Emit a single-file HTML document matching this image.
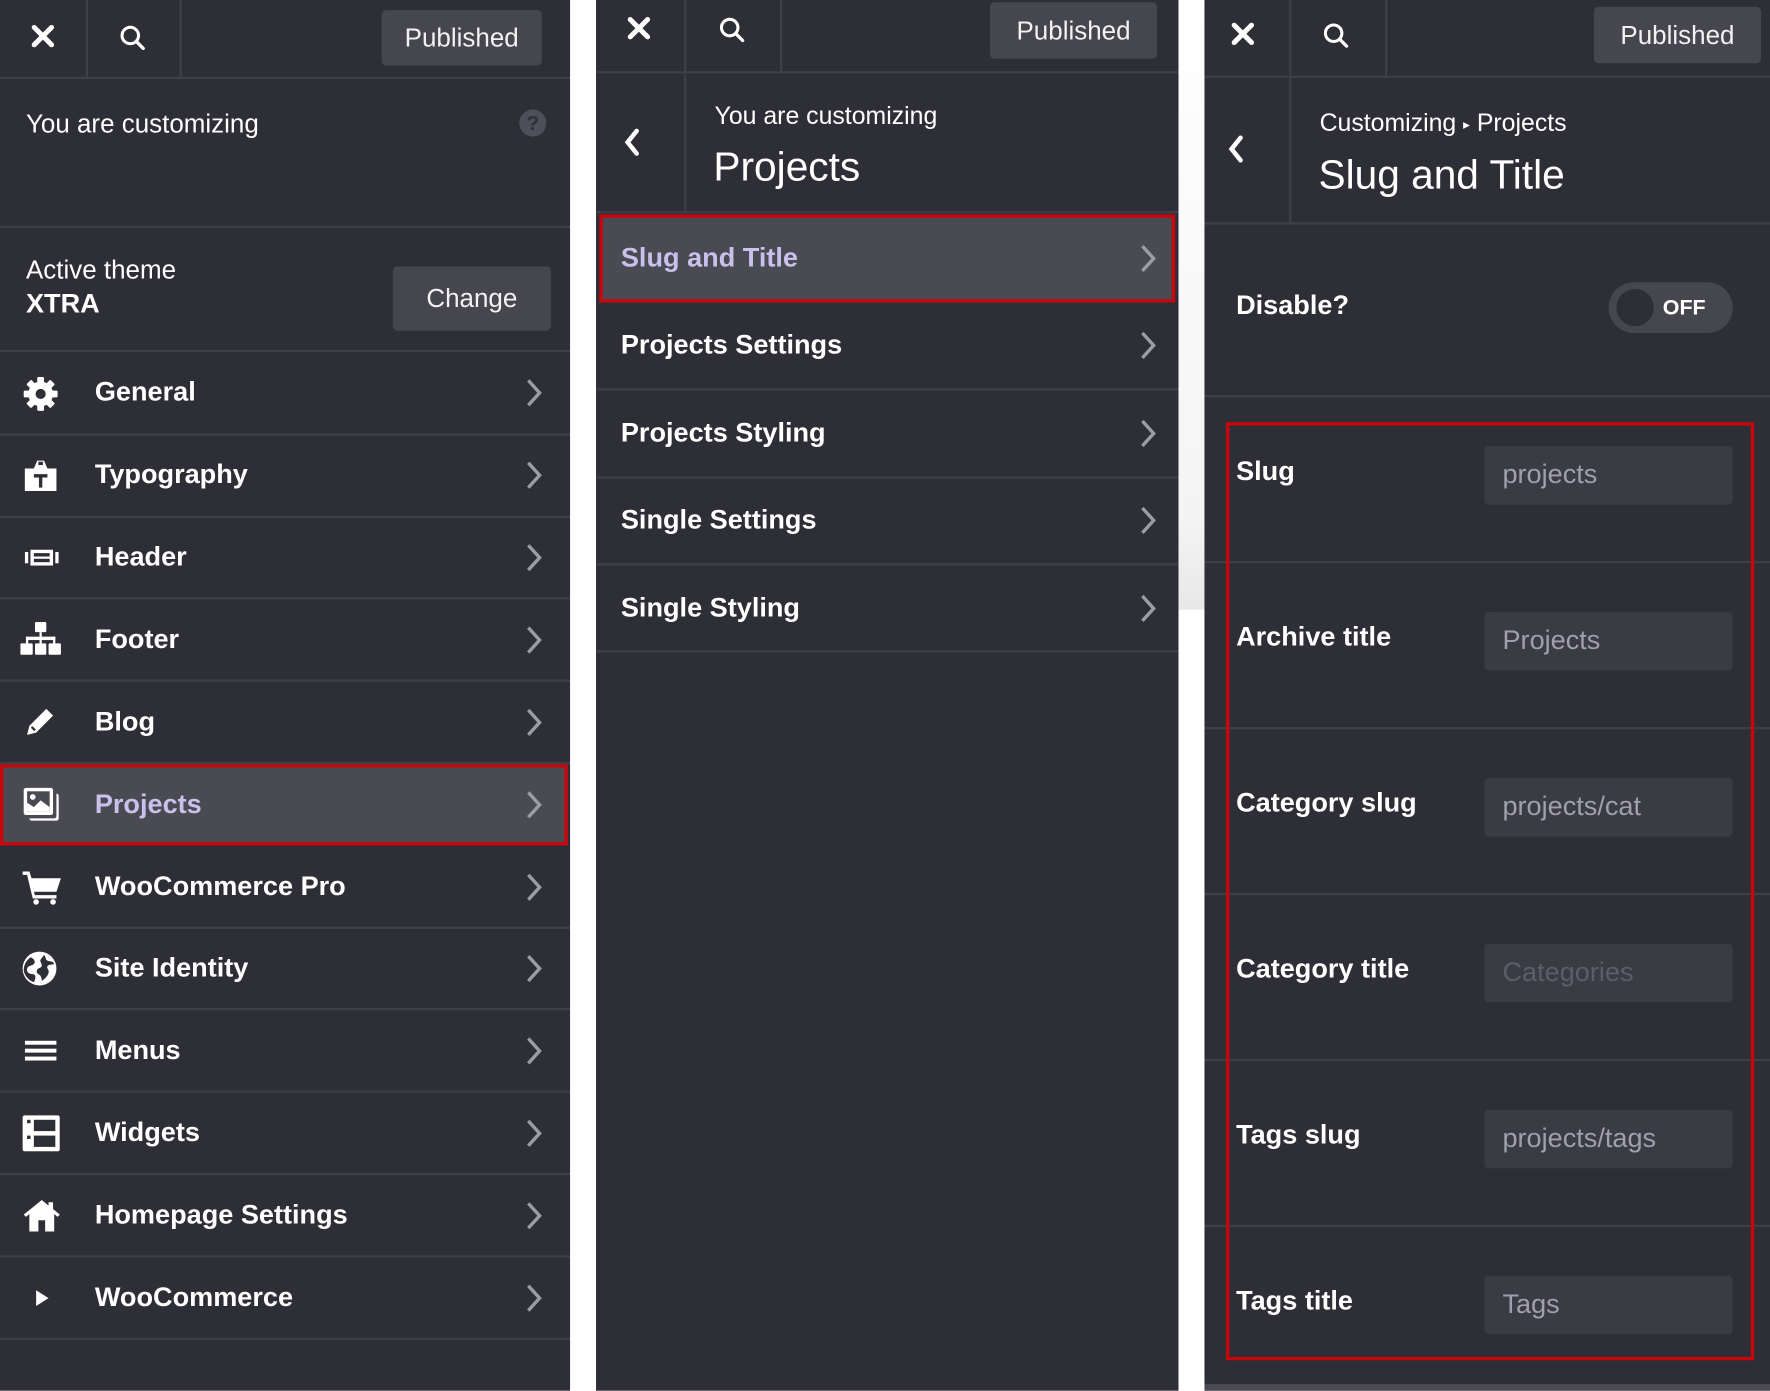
<!DOCTYPE html>
<html><head><meta charset="utf-8">
<style>
*{margin:0;padding:0;box-sizing:border-box}
html,body{width:1770px;height:1391px;overflow:hidden;background:#fff}
#w{position:absolute;left:0;top:0;width:1568px;height:1232px;transform:scale(1.12883);transform-origin:0 0;font-family:"Liberation Sans",Arial,sans-serif;color:#fff}
.p{position:absolute;top:0;height:1232px;background:#2e2e36;overflow:hidden}
.a{position:absolute}
.hl{position:absolute;left:0;right:0;height:2px;background:#3e3f47}
.vl{position:absolute;width:2px;background:#3e3f47}
.pub{position:absolute;background:#46464e;border-radius:4px;font-size:23px;display:flex;align-items:center;justify-content:center;color:#f2f2f2}
.t{position:absolute;white-space:nowrap;line-height:1;transform:translateY(-50%)}
.b{font-weight:bold;font-size:24px}
.chev{position:absolute;width:14px;height:26px}
.inp{position:absolute;background:#3b3b44;border-radius:4px;font-size:24px;color:#a09fad;padding-left:16px;display:flex;align-items:center}
.red{position:absolute;border:3px solid #c8070d}
</style></head><body>
<div id="w">
<svg width="0" height="0" style="position:absolute"><defs>
<symbol id="ch" viewBox="0 0 14 26"><path d="M2 2 L12 13 L2 24" fill="none" stroke="#9c9ca4" stroke-width="3"/></symbol>
<symbol id="x" viewBox="0 0 20 20"><path d="M3 3L17 17M17 3L3 17" stroke="#fff" stroke-width="4" stroke-linecap="round"/></symbol>
<symbol id="s" viewBox="0 0 24 24"><circle cx="10" cy="10" r="7" fill="none" stroke="#fff" stroke-width="2.6"/><path d="M15 15L21 21" stroke="#fff" stroke-width="2.8" stroke-linecap="round"/></symbol>
<symbol id="bk" viewBox="0 0 14 26"><path d="M11 3L3 13L11 23" fill="none" stroke="#fff" stroke-width="4" stroke-linecap="round"/></symbol>
</defs></svg>

<!-- PANEL 1 -->
<div class="p" style="left:0;width:505px">
 <svg class="a" style="left:27px;top:21px" width="22" height="22"><use href="#x"/></svg>
 <svg class="a" style="left:105px;top:21px" width="25" height="25"><use href="#s"/></svg>
 <div class="vl" style="left:76px;top:0;height:69px"></div>
 <div class="vl" style="left:159px;top:0;height:69px"></div>
 <div class="pub" style="left:338px;top:9px;width:142px;height:49px">Published</div>
 <div class="hl" style="top:68px"></div>
 <div class="t" style="left:23px;top:110px;font-size:23px">You are customizing</div>
 <div class="a" style="left:460px;top:97px;width:24px;height:24px;border-radius:50%;background:#4e4f58;color:#2e2e36;font-weight:bold;font-size:18px;text-align:center;line-height:24px">?</div>
 <div class="hl" style="top:200px"></div>
 <div class="t" style="left:23px;top:239px;font-size:23px">Active theme</div>
 <div class="t b" style="left:23px;top:270px">XTRA</div>
 <div class="pub" style="left:348px;top:236px;width:140px;height:57px">Change</div>
 <div class="hl" style="top:310px"></div>

 <!-- rows -->
 <div class="a" style="left:0;top:677px;width:503px;height:72px;background:#4a4a53"></div>
 <div class="red" style="left:0;top:677px;width:503px;height:72px"></div>

 <div class="t b" style="left:84px;top:348px">General</div>
 <div class="t b" style="left:84px;top:421px">Typography</div>
 <div class="t b" style="left:84px;top:494px">Header</div>
 <div class="t b" style="left:84px;top:567px">Footer</div>
 <div class="t b" style="left:84px;top:640px">Blog</div>
 <div class="t b" style="left:84px;top:713px;color:#c7c1ec">Projects</div>
 <div class="t b" style="left:84px;top:786px">WooCommerce Pro</div>
 <div class="t b" style="left:84px;top:858px">Site Identity</div>
 <div class="t b" style="left:84px;top:931px">Menus</div>
 <div class="t b" style="left:84px;top:1004px">Widgets</div>
 <div class="t b" style="left:84px;top:1077px">Homepage Settings</div>
 <div class="t b" style="left:84px;top:1150px">WooCommerce</div>

 <div class="hl" style="top:384px"></div><div class="hl" style="top:457px"></div><div class="hl" style="top:529px"></div>
 <div class="hl" style="top:602px"></div><div class="hl" style="top:675px"></div><div class="hl" style="top:821px"></div>
 <div class="hl" style="top:893px"></div><div class="hl" style="top:966px"></div><div class="hl" style="top:1039px"></div>
 <div class="hl" style="top:1112px"></div><div class="hl" style="top:1185px"></div>

 <svg class="chev" style="left:466px;top:335px"><use href="#ch"/></svg>
 <svg class="chev" style="left:466px;top:408px"><use href="#ch"/></svg>
 <svg class="chev" style="left:466px;top:481px"><use href="#ch"/></svg>
 <svg class="chev" style="left:466px;top:554px"><use href="#ch"/></svg>
 <svg class="chev" style="left:466px;top:627px"><use href="#ch"/></svg>
 <svg class="chev" style="left:466px;top:700px"><use href="#ch"/></svg>
 <svg class="chev" style="left:466px;top:773px"><use href="#ch"/></svg>
 <svg class="chev" style="left:466px;top:845px"><use href="#ch"/></svg>
 <svg class="chev" style="left:466px;top:918px"><use href="#ch"/></svg>
 <svg class="chev" style="left:466px;top:991px"><use href="#ch"/></svg>
 <svg class="chev" style="left:466px;top:1064px"><use href="#ch"/></svg>
 <svg class="chev" style="left:466px;top:1137px"><use href="#ch"/></svg>

 <!-- icons -->
 <svg class="a" style="left:20px;top:333px" width="32" height="32" viewBox="0 0 32 32"><g fill="#fff"><circle cx="16" cy="16" r="11"/><rect x="13" y="1" width="6" height="30" rx="1"/><rect x="1" y="13" width="30" height="6" rx="1"/><rect x="13" y="1" width="6" height="30" rx="1" transform="rotate(45 16 16)"/><rect x="13" y="1" width="6" height="30" rx="1" transform="rotate(-45 16 16)"/></g><circle cx="16" cy="16" r="4.5" fill="#2e2e36"/></svg>
 <svg class="a" style="left:21px;top:406px" width="30" height="30" viewBox="0 0 30 30"><path d="M1 9h28v20H1z M9 9 L12 2h6l3 7" fill="#fff"/><path d="M9 14h12v3h-4.5v9h-3v-9H9z" fill="#2e2e36"/><rect x="13" y="3" width="4" height="3" fill="#2e2e36"/></svg>
 <svg class="a" style="left:22px;top:486px" width="30" height="16" viewBox="0 0 30 16"><g fill="#fff"><rect x="0" y="3" width="3" height="10"/><rect x="27" y="3" width="3" height="10"/><rect x="5" y="1" width="20" height="14"/></g><rect x="8" y="4" width="14" height="3" fill="#2e2e36"/><rect x="8" y="9" width="14" height="3" fill="#2e2e36"/></svg>
 <svg class="a" style="left:18px;top:551px" width="36" height="30" viewBox="0 0 36 30"><g fill="#fff"><rect x="13" y="0" width="10" height="9" rx="1"/><rect x="17" y="9" width="2" height="6"/><rect x="5" y="13" width="26" height="3"/><rect x="5" y="13" width="2" height="7"/><rect x="29" y="13" width="2" height="7"/><rect x="17" y="13" width="2" height="7"/><rect x="0" y="19" width="11" height="10" rx="1"/><rect x="13" y="19" width="10" height="10" rx="1"/><rect x="25" y="19" width="11" height="10" rx="1"/></g></svg>
 <svg class="a" style="left:23px;top:626px" width="26" height="26" viewBox="0 0 26 26"><path d="M18 2l6 6L9 23 1 25l2-8z" fill="#fff"/><path d="M5 18l3 3" stroke="#2e2e36" stroke-width="2"/></svg>
 <svg class="a" style="left:20px;top:697px" width="34" height="32" viewBox="0 0 34 32"><rect x="6" y="6" width="26" height="24" rx="2" fill="#fff"/><rect x="4" y="4" width="26" height="24" rx="2" fill="#4a4a53"/><rect x="1" y="1" width="26" height="24" rx="2" fill="#fff"/><rect x="4" y="4" width="20" height="18" fill="#4a4a53"/><path d="M4 22 L4 14 L10 18 L16 12 L24 18 V22z" fill="#fff"/><circle cx="9" cy="9" r="2.5" fill="#fff"/></svg>
 <svg class="a" style="left:20px;top:770px" width="34" height="32" viewBox="0 0 34 32"><g fill="#fff"><path d="M0 2h6l2 6h26l-4 12H10l1 3h19v3H9L4 5H0z"/><circle cx="12" cy="29" r="2.5"/><circle cx="27" cy="29" r="2.5"/></g></svg>
 <svg class="a" style="left:19px;top:842px" width="32" height="32" viewBox="0 0 32 32"><circle cx="16" cy="16" r="15" fill="#fff"/><path d="M8 6c3 1 5 4 3 6s-5 1-6 4 2 5 5 5 3 4 1 7c-4-1-8-5-9-10 0-5 2-9 6-12z M20 4c2 2 1 4 3 5s5 0 6 3c-2 1-5 0-6 2s2 3 1 6-3 5-6 7c0-3-1-5-3-6s-2-4 0-5 3-1 3-3-2-3-1-5z" fill="#2e2e36"/></svg>
 <svg class="a" style="left:22px;top:920px" width="28" height="22" viewBox="0 0 28 22"><g fill="#fff"><rect y="2" width="28" height="3.5"/><rect y="9" width="28" height="3.5"/><rect y="16" width="28" height="3.5"/></g></svg>
 <svg class="a" style="left:20px;top:988px" width="33" height="32" viewBox="0 0 33 32"><rect x="0" y="0" width="33" height="32" rx="2" fill="#fff"/><rect x="10" y="4" width="19" height="10" fill="#2e2e36"/><rect x="10" y="18" width="19" height="10" fill="#2e2e36"/><rect x="4" y="4" width="3" height="3" fill="#2e2e36"/><rect x="4" y="18" width="3" height="3" fill="#2e2e36"/></svg>
 <svg class="a" style="left:21px;top:1062px" width="32" height="30" viewBox="0 0 32 30"><path d="M16 1L0 14l2 2 3-2.5V29h22V13.5l3 2.5 2-2-6-5V3h-4v3z" fill="#fff"/><rect x="13" y="19" width="6" height="10" fill="#2e2e36"/></svg>
 <svg class="a" style="left:31px;top:1141px" width="14" height="18" viewBox="0 0 14 18"><path d="M1 2L12 9L1 16z" fill="#fff"/></svg>
</div>

<!-- PANEL 2 -->
<div class="p" style="left:528px;width:516px">
 <svg class="a" style="left:27px;top:14px" width="22" height="22"><use href="#x"/></svg>
 <svg class="a" style="left:108px;top:14px" width="25" height="25"><use href="#s"/></svg>
 <div class="vl" style="left:78px;top:0;height:188px"></div>
 <div class="vl" style="left:163px;top:0;height:63px"></div>
 <div class="pub" style="left:349px;top:2px;width:148px;height:50px">Published</div>
 <div class="hl" style="top:63px"></div>
 <svg class="a" style="left:25px;top:113px" width="14" height="26"><use href="#bk"/></svg>
 <div class="t" style="left:105px;top:103px;font-size:22px">You are customizing</div>
 <div class="t" style="left:104px;top:148px;font-size:36px;font-weight:300">Projects</div>
 <div class="hl" style="top:187px"></div>
 <div class="a" style="left:3px;top:190px;width:510px;height:78px;background:#4a4a53"></div>
 <div class="red" style="left:3px;top:190px;width:510px;height:78px"></div>
 <div class="t b" style="left:22px;top:229px;color:#c7c1ec">Slug and Title</div>
 <div class="t b" style="left:22px;top:306px">Projects Settings</div>
 <div class="t b" style="left:22px;top:384px">Projects Styling</div>
 <div class="t b" style="left:22px;top:461px">Single Settings</div>
 <div class="t b" style="left:22px;top:539px">Single Styling</div>
 <div class="hl" style="top:344px"></div><div class="hl" style="top:422px"></div><div class="hl" style="top:499px"></div><div class="hl" style="top:576px"></div>
 <svg class="chev" style="left:482px;top:216px"><use href="#ch"/></svg>
 <svg class="chev" style="left:482px;top:293px"><use href="#ch"/></svg>
 <svg class="chev" style="left:482px;top:371px"><use href="#ch"/></svg>
 <svg class="chev" style="left:482px;top:448px"><use href="#ch"/></svg>
 <svg class="chev" style="left:482px;top:526px"><use href="#ch"/></svg>
</div>
<div class="a" style="left:1044px;top:0;width:23px;height:540px;background:linear-gradient(#fff 0%,#f4f4f4 85%,#e8e8e8 100%)"></div>

<!-- PANEL 3 -->
<div class="p" style="left:1067px;width:501px">
 <svg class="a" style="left:23px;top:19px" width="22" height="22"><use href="#x"/></svg>
 <svg class="a" style="left:104px;top:19px" width="25" height="25"><use href="#s"/></svg>
 <div class="vl" style="left:75px;top:0;height:198px"></div>
 <div class="vl" style="left:160px;top:0;height:68px"></div>
 <div class="pub" style="left:345px;top:6px;width:148px;height:50px">Published</div>
 <div class="hl" style="top:67px"></div>
 <svg class="a" style="left:21px;top:119px" width="14" height="26"><use href="#bk"/></svg>
 <div class="t" style="left:102px;top:109px;font-size:22px">Customizing <span style="font-size:12px;vertical-align:middle">▸</span> Projects</div>
 <div class="t" style="left:101px;top:155px;font-size:36px;font-weight:300">Slug and Title</div>
 <div class="hl" style="top:197px"></div>
 <div class="t b" style="left:28px;top:271px">Disable?</div>
 <div class="a" style="left:358px;top:250px;width:110px;height:45px;border-radius:23px;background:#46464e"></div>
 <div class="a" style="left:365px;top:256px;width:33px;height:33px;border-radius:50%;background:#2e2e36"></div>
 <div class="t" style="left:406px;top:273px;font-size:19px;font-weight:bold">OFF</div>
 <div class="hl" style="top:350px"></div>
 <div class="hl" style="top:497px"></div><div class="hl" style="top:644px"></div><div class="hl" style="top:791px"></div><div class="hl" style="top:938px"></div><div class="hl" style="top:1085px"></div>
 <div class="hl" style="top:1226px;height:6px;background:#4a4a52"></div>

 <div class="t b" style="left:28px;top:418px">Slug</div>
 <div class="inp" style="left:248px;top:395px;width:220px;height:52px">projects</div>
 <div class="t b" style="left:28px;top:565px">Archive title</div>
 <div class="inp" style="left:248px;top:542px;width:220px;height:52px">Projects</div>
 <div class="t b" style="left:28px;top:712px">Category slug</div>
 <div class="inp" style="left:248px;top:689px;width:220px;height:52px">projects/cat</div>
 <div class="t b" style="left:28px;top:859px">Category title</div>
 <div class="inp" style="left:248px;top:836px;width:220px;height:52px;color:#5d5d68">Categories</div>
 <div class="t b" style="left:28px;top:1006px">Tags slug</div>
 <div class="inp" style="left:248px;top:983px;width:220px;height:52px">projects/tags</div>
 <div class="t b" style="left:28px;top:1153px">Tags title</div>
 <div class="inp" style="left:248px;top:1130px;width:220px;height:52px">Tags</div>

 <div class="red" style="left:19px;top:374px;width:468px;height:831px"></div>
</div>
</div>
</body></html>
